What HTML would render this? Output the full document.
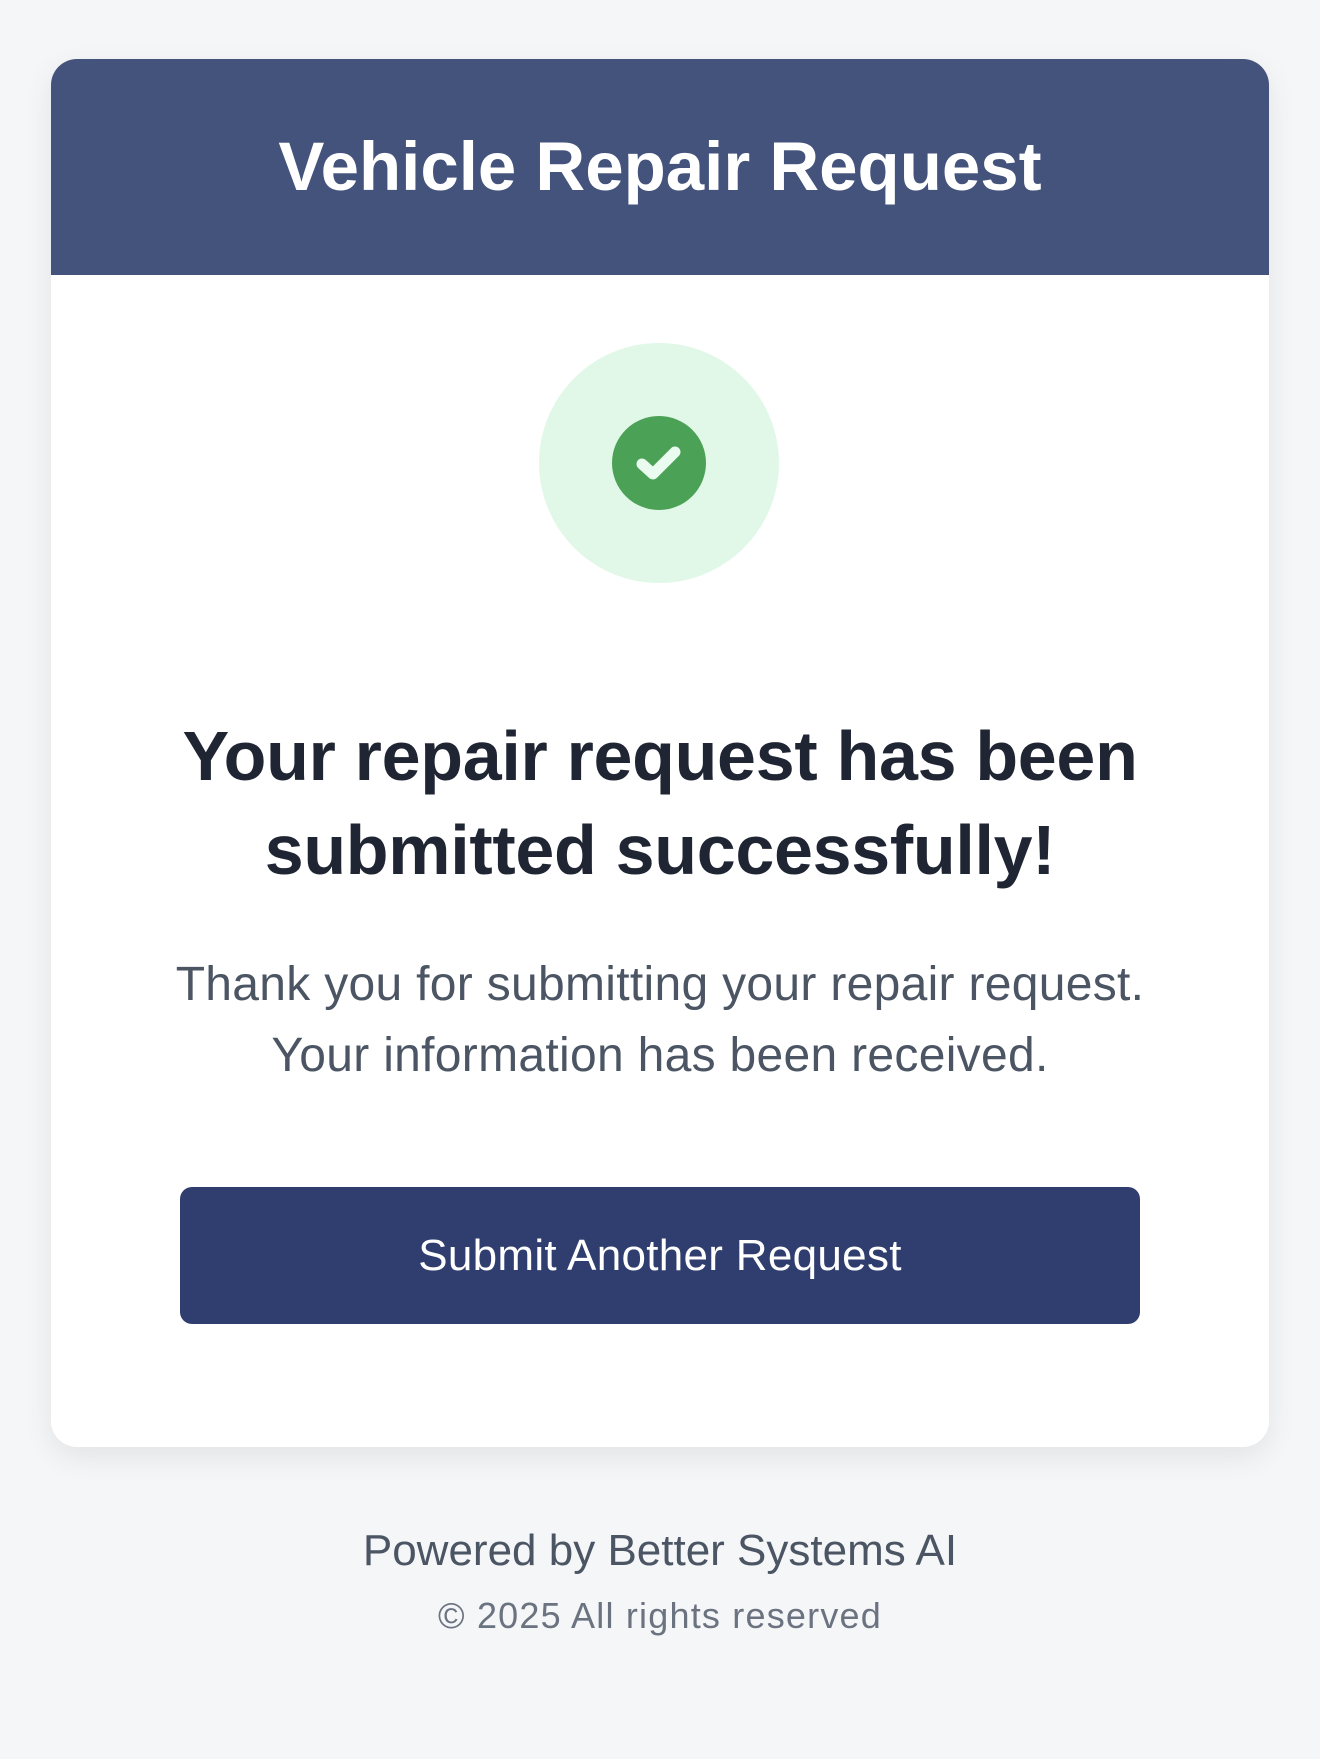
<!DOCTYPE html>
<html><head><meta charset="utf-8"><style>
*{margin:0;padding:0;box-sizing:border-box}
body{width:1320px;height:1759px;background:#f5f6f8;font-family:"Liberation Sans",sans-serif;position:relative;overflow:hidden}
.card{position:absolute;left:51px;top:59px;width:1218px;height:1388px;background:#fff;border-radius:26px;box-shadow:0 10px 30px rgba(0,0,0,0.08);overflow:hidden}
.hdr{height:216px;background:#44537c;color:#fff;font-weight:bold;font-size:69px;text-align:center;line-height:216px}
.outer{position:absolute;left:488px;top:284px;width:240px;height:240px;border-radius:50%;background:#e1f8e8}
.inner{position:absolute;left:73px;top:73px;width:94px;height:94px;border-radius:50%;background:#4ba155}
h1{position:absolute;left:0;width:1218px;top:650px;text-align:center;font-size:70px;line-height:94px;color:#1f2532;letter-spacing:-0.3px}
p{position:absolute;left:0;width:1218px;top:890px;text-align:center;font-size:48px;line-height:71px;color:#4b5563;letter-spacing:0.3px}
.btn{position:absolute;left:129px;top:1128px;width:960px;height:137px;background:#2f3e6e;border-radius:12px;color:#fff;font-size:44px;text-align:center;line-height:137px;letter-spacing:0.3px}
.f1{position:absolute;top:1526px;width:1320px;text-align:center;font-size:44px;color:#4b5563}
.f2{position:absolute;top:1595px;width:1320px;text-align:center;font-size:36px;color:#6b7280;letter-spacing:1.2px}
</style></head><body>
<div class="card">
<div class="hdr">Vehicle Repair Request</div>
<div class="outer"><div class="inner"><svg width="94" height="94" viewBox="0 0 94 94"><path d="M30 48 L41 58 L63 36" fill="none" stroke="#eafbef" stroke-width="11" stroke-linecap="round" stroke-linejoin="round"/></svg></div></div>
<h1>Your repair request has been<br>submitted successfully!</h1>
<p>Thank you for submitting your repair request.<br>Your information has been received.</p>
<div class="btn">Submit Another Request</div>
</div>
<div class="f1">Powered by Better Systems AI</div>
<div class="f2">© 2025 All rights reserved</div>
</body></html>
